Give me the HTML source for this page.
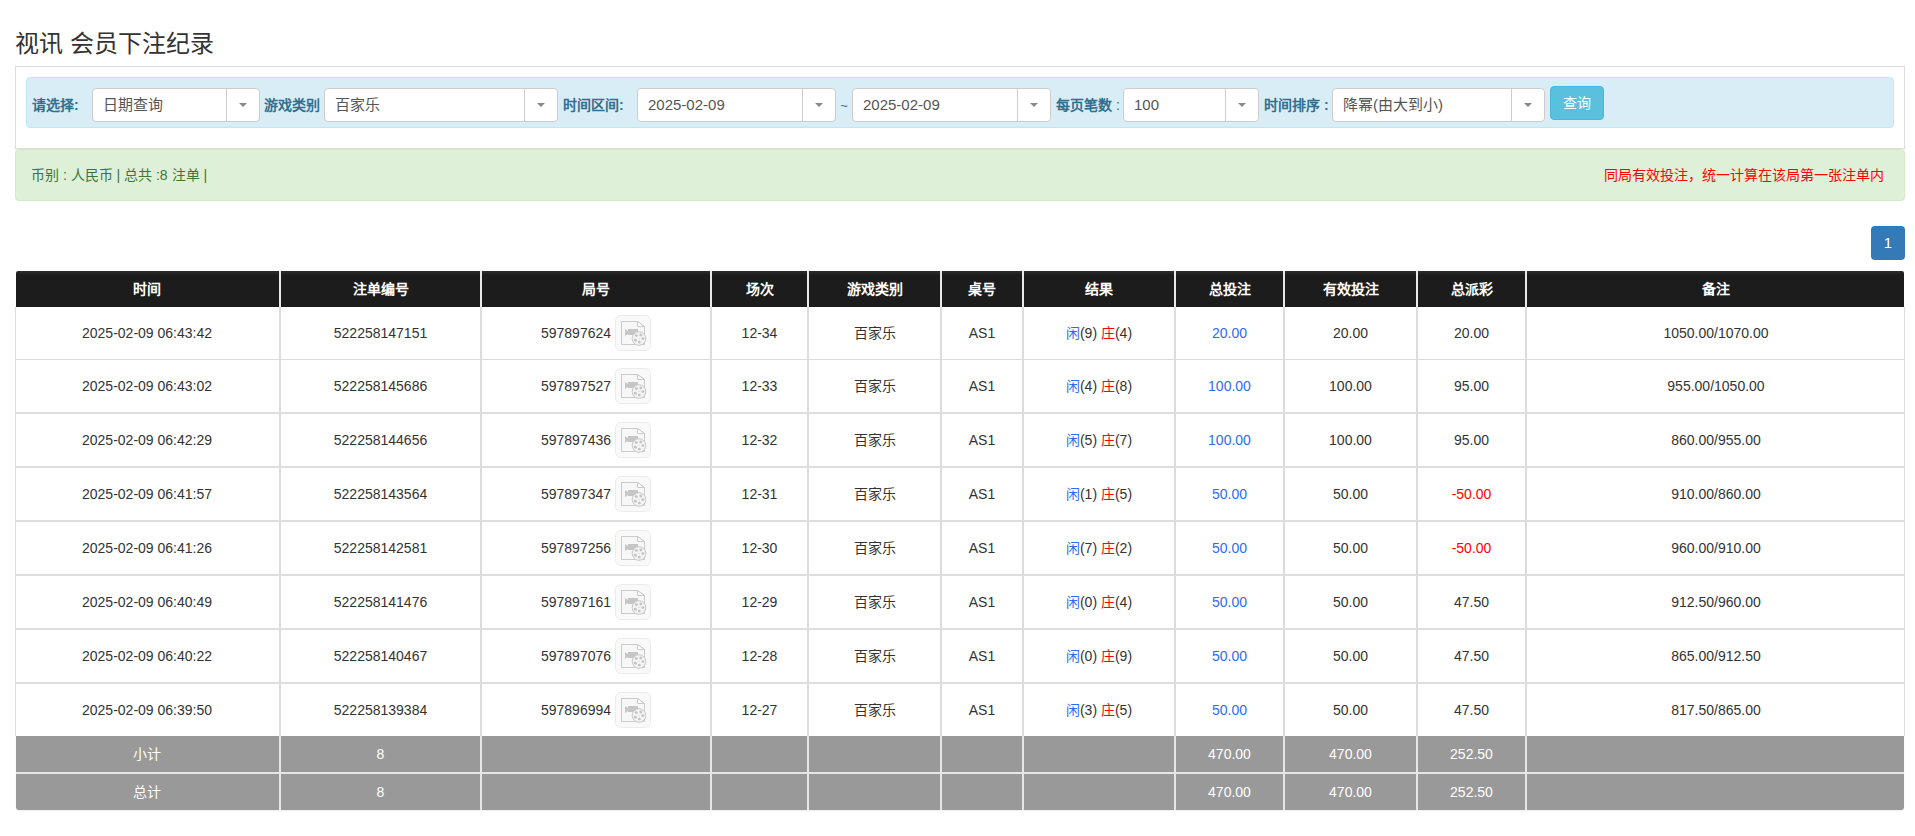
<!DOCTYPE html><html lang="zh-CN"><head><meta charset="utf-8"><style>
*{box-sizing:border-box;margin:0;padding:0}
html,body{width:1915px;height:836px;overflow:hidden;background:#fff;font-family:"Liberation Sans", sans-serif;color:#333;line-height:1}
.a{position:absolute}
.c{position:absolute;display:flex;align-items:center;justify-content:center;white-space:nowrap}
.title{left:15px;top:27px;font-size:24px;line-height:34px;color:#333;white-space:nowrap}
.panel{left:15px;top:66px;width:1890px;height:83px;border:1px solid #ddd;background:#fff}
.info{left:26px;top:77px;width:1868px;height:51px;background:#d9edf7;border:1px solid #bce8f1;border-radius:4px}
.lbl{position:absolute;top:88px;height:34px;display:flex;align-items:center;font-size:14px;font-weight:bold;color:#31708f;white-space:nowrap}
.sel{position:absolute;top:88px;height:34px;background:#fff;border:1px solid #ccc;border-radius:4px}
.sel .t{position:absolute;left:10px;top:-1px;height:32px;display:flex;align-items:center;font-size:15px;color:#555;white-space:nowrap}
.sel .d{position:absolute;top:0;width:1px;height:32px;background:#ccc}
.sel .ar{position:absolute;top:14px;width:0;height:0;border-left:4px solid transparent;border-right:4px solid transparent;border-top:4px solid #888}
.btn{left:1550px;top:86px;width:54px;height:34px;background:#5bc0de;border:1px solid #46b8da;border-radius:4px;color:#fff;font-size:14px;display:flex;align-items:center;justify-content:center}
.alert{left:15px;top:149px;width:1890px;height:52px;background:#dff0d8;border:1px solid #d6e9c6;border-radius:4px}
.pg{left:1871px;top:226px;width:34px;height:34px;background:#337ab7;border-radius:4px;color:#fff;font-size:15px;display:flex;align-items:center;justify-content:center;padding-bottom:2px}
.hd{color:#fff;font-weight:bold;font-size:14px}
.td{font-size:14px;color:#333}
.ft{color:#fff;font-size:14px}
.bl{color:#2d6cf0}
.rd{color:#f00}
.rd2{color:#f00}
</style></head><body>
<div class="a title">视讯 会员下注纪录</div>
<div class="a panel"></div>
<div class="a info"></div>
<div class="lbl" style="left:32px">请选择:</div>
<div class="lbl" style="left:264px">游戏类别</div>
<div class="lbl" style="left:563px">时间区间:</div>
<div class="lbl" style="left:1056px">每页笔数<span style="font-weight:normal">&nbsp;:</span></div>
<div class="lbl" style="left:1264px">时间排序 :</div>
<div class="sel" style="left:92px;width:168px"><div class="t">日期查询</div><div class="d" style="left:133px"></div><div class="ar" style="left:146px"></div></div>
<div class="sel" style="left:324px;width:234px"><div class="t">百家乐</div><div class="d" style="left:199px"></div><div class="ar" style="left:212px"></div></div>
<div class="sel" style="left:637px;width:199px"><div class="t">2025-02-09</div><div class="d" style="left:164px"></div><div class="ar" style="left:177px"></div></div>
<div class="sel" style="left:852px;width:199px"><div class="t">2025-02-09</div><div class="d" style="left:164px"></div><div class="ar" style="left:177px"></div></div>
<div class="sel" style="left:1123px;width:136px"><div class="t">100</div><div class="d" style="left:101px"></div><div class="ar" style="left:114px"></div></div>
<div class="sel" style="left:1332px;width:213px"><div class="t">降幂(由大到小)</div><div class="d" style="left:178px"></div><div class="ar" style="left:191px"></div></div>
<div class="c" style="left:838px;top:88px;width:12px;height:34px;font-size:13px;color:#31708f">~</div>
<div class="a btn">查询</div>
<div class="a alert"></div>
<div class="c" style="left:31px;top:149px;height:52px;font-size:14px;color:#3c763d">币别 : 人民币 | 总共 :8 注单 |</div>
<div class="c" style="left:1604px;top:149px;height:52px;font-size:14px;color:#f00">同局有效投注，统一计算在该局第一张注单内</div>
<div class="a pg">1</div>
<div class="a" style="left:16px;top:271px;width:1888px;height:36px;background:linear-gradient(#2c2c2c,#262626 2px,#1c1c1c 4px);border-radius:2px 2px 0 0"></div>
<div class="a" style="left:279px;top:271px;width:2px;height:36px;background:#e8e8e8"></div>
<div class="a" style="left:480px;top:271px;width:2px;height:36px;background:#e8e8e8"></div>
<div class="a" style="left:710px;top:271px;width:2px;height:36px;background:#e8e8e8"></div>
<div class="a" style="left:807px;top:271px;width:2px;height:36px;background:#e8e8e8"></div>
<div class="a" style="left:940px;top:271px;width:2px;height:36px;background:#e8e8e8"></div>
<div class="a" style="left:1022px;top:271px;width:2px;height:36px;background:#e8e8e8"></div>
<div class="a" style="left:1174px;top:271px;width:2px;height:36px;background:#e8e8e8"></div>
<div class="a" style="left:1283px;top:271px;width:2px;height:36px;background:#e8e8e8"></div>
<div class="a" style="left:1416px;top:271px;width:2px;height:36px;background:#e8e8e8"></div>
<div class="a" style="left:1525px;top:271px;width:2px;height:36px;background:#e8e8e8"></div>
<div class="c hd" style="left:15px;top:271px;width:264px;height:36px"><span>时间</span></div>
<div class="c hd" style="left:281px;top:271px;width:199px;height:36px"><span>注单编号</span></div>
<div class="c hd" style="left:482px;top:271px;width:228px;height:36px"><span>局号</span></div>
<div class="c hd" style="left:712px;top:271px;width:95px;height:36px"><span>场次</span></div>
<div class="c hd" style="left:809px;top:271px;width:131px;height:36px"><span>游戏类别</span></div>
<div class="c hd" style="left:942px;top:271px;width:80px;height:36px"><span>桌号</span></div>
<div class="c hd" style="left:1024px;top:271px;width:150px;height:36px"><span>结果</span></div>
<div class="c hd" style="left:1176px;top:271px;width:107px;height:36px"><span>总投注</span></div>
<div class="c hd" style="left:1285px;top:271px;width:131px;height:36px"><span>有效投注</span></div>
<div class="c hd" style="left:1418px;top:271px;width:107px;height:36px"><span>总派彩</span></div>
<div class="c hd" style="left:1527px;top:271px;width:378px;height:36px"><span>备注</span></div>
<svg class="a" style="left:0;top:0" width="1915" height="836" viewBox="0 0 1915 836">
<rect x="15" y="307" width="1" height="429" fill="#dcdcdc"/>
<rect x="1904" y="307" width="1" height="429" fill="#dcdcdc"/>
<rect x="16" y="359" width="1888" height="1" fill="#dcdcdc"/>
<rect x="16" y="412" width="1888" height="2" fill="#dedede"/>
<rect x="16" y="466" width="1888" height="2" fill="#dedede"/>
<rect x="16" y="520" width="1888" height="2" fill="#dedede"/>
<rect x="16" y="574" width="1888" height="2" fill="#dedede"/>
<rect x="16" y="628" width="1888" height="2" fill="#dedede"/>
<rect x="16" y="682" width="1888" height="2" fill="#dedede"/>
<rect x="279" y="307" width="2" height="429" fill="#dcdcdc"/>
<rect x="480" y="307" width="2" height="429" fill="#dcdcdc"/>
<rect x="710" y="307" width="2" height="429" fill="#dcdcdc"/>
<rect x="807" y="307" width="2" height="429" fill="#dcdcdc"/>
<rect x="940" y="307" width="2" height="429" fill="#dcdcdc"/>
<rect x="1022" y="307" width="2" height="429" fill="#dcdcdc"/>
<rect x="1174" y="307" width="2" height="429" fill="#dcdcdc"/>
<rect x="1283" y="307" width="2" height="429" fill="#dcdcdc"/>
<rect x="1416" y="307" width="2" height="429" fill="#dcdcdc"/>
<rect x="1525" y="307" width="2" height="429" fill="#dcdcdc"/>
</svg>
<div class="c td" style="left:15px;top:307px;width:264px;height:52px"><span>2025-02-09 06:43:42</span></div>
<div class="c td" style="left:281px;top:307px;width:199px;height:52px"><span>522258147151</span></div>
<div class="c td" style="left:482px;top:307px;width:228px;height:52px"><span>597897624</span><svg width="36" height="36" viewBox="0 0 36 36" style="margin-left:4px;flex:none"><rect x="0.5" y="0.5" width="35" height="35" rx="5" fill="#f9f9f9" stroke="#ebebeb"/><path d="M6.5 6.5H22.5L29.5 11.5V29.5H6.5Z" fill="#f7f7f7" stroke="#cbcbcb"/><path d="M22.5 6.5V11.5H29.5Z" fill="#fefefe" stroke="#cbcbcb" stroke-linejoin="round"/><path d="M10 14L13 16V14H23V20H13V19L10 21Z" fill="#c6c6c6"/><circle cx="24" cy="23.5" r="6.8" fill="#f4f4f4" stroke="#c8c8c8"/><circle cx="21.3" cy="20.6" r="1.45" fill="#c4c4c4"/><circle cx="25.8" cy="20" r="1.45" fill="#c4c4c4"/><circle cx="27.9" cy="23.6" r="1.45" fill="#c4c4c4"/><circle cx="24.3" cy="27.1" r="1.45" fill="#c4c4c4"/><circle cx="20.4" cy="25.3" r="1.45" fill="#c4c4c4"/><circle cx="24" cy="23.5" r="0.5" fill="#c4c4c4"/></svg></div>
<div class="c td" style="left:712px;top:307px;width:95px;height:52px"><span>12-34</span></div>
<div class="c td" style="left:809px;top:307px;width:131px;height:52px"><span>百家乐</span></div>
<div class="c td" style="left:942px;top:307px;width:80px;height:52px"><span>AS1</span></div>
<div class="c td" style="left:1024px;top:307px;width:150px;height:52px"><span><span class="bl">闲</span>(9) <span class="rd">庄</span>(4)</span></div>
<div class="c td" style="left:1176px;top:307px;width:107px;height:52px"><span><span class="bl">20.00</span></span></div>
<div class="c td" style="left:1285px;top:307px;width:131px;height:52px"><span>20.00</span></div>
<div class="c td" style="left:1418px;top:307px;width:107px;height:52px"><span>20.00</span></div>
<div class="c td" style="left:1527px;top:307px;width:378px;height:52px"><span>1050.00/1070.00</span></div>
<div class="c td" style="left:15px;top:360px;width:264px;height:52px"><span>2025-02-09 06:43:02</span></div>
<div class="c td" style="left:281px;top:360px;width:199px;height:52px"><span>522258145686</span></div>
<div class="c td" style="left:482px;top:360px;width:228px;height:52px"><span>597897527</span><svg width="36" height="36" viewBox="0 0 36 36" style="margin-left:4px;flex:none"><rect x="0.5" y="0.5" width="35" height="35" rx="5" fill="#f9f9f9" stroke="#ebebeb"/><path d="M6.5 6.5H22.5L29.5 11.5V29.5H6.5Z" fill="#f7f7f7" stroke="#cbcbcb"/><path d="M22.5 6.5V11.5H29.5Z" fill="#fefefe" stroke="#cbcbcb" stroke-linejoin="round"/><path d="M10 14L13 16V14H23V20H13V19L10 21Z" fill="#c6c6c6"/><circle cx="24" cy="23.5" r="6.8" fill="#f4f4f4" stroke="#c8c8c8"/><circle cx="21.3" cy="20.6" r="1.45" fill="#c4c4c4"/><circle cx="25.8" cy="20" r="1.45" fill="#c4c4c4"/><circle cx="27.9" cy="23.6" r="1.45" fill="#c4c4c4"/><circle cx="24.3" cy="27.1" r="1.45" fill="#c4c4c4"/><circle cx="20.4" cy="25.3" r="1.45" fill="#c4c4c4"/><circle cx="24" cy="23.5" r="0.5" fill="#c4c4c4"/></svg></div>
<div class="c td" style="left:712px;top:360px;width:95px;height:52px"><span>12-33</span></div>
<div class="c td" style="left:809px;top:360px;width:131px;height:52px"><span>百家乐</span></div>
<div class="c td" style="left:942px;top:360px;width:80px;height:52px"><span>AS1</span></div>
<div class="c td" style="left:1024px;top:360px;width:150px;height:52px"><span><span class="bl">闲</span>(4) <span class="rd">庄</span>(8)</span></div>
<div class="c td" style="left:1176px;top:360px;width:107px;height:52px"><span><span class="bl">100.00</span></span></div>
<div class="c td" style="left:1285px;top:360px;width:131px;height:52px"><span>100.00</span></div>
<div class="c td" style="left:1418px;top:360px;width:107px;height:52px"><span>95.00</span></div>
<div class="c td" style="left:1527px;top:360px;width:378px;height:52px"><span>955.00/1050.00</span></div>
<div class="c td" style="left:15px;top:414px;width:264px;height:52px"><span>2025-02-09 06:42:29</span></div>
<div class="c td" style="left:281px;top:414px;width:199px;height:52px"><span>522258144656</span></div>
<div class="c td" style="left:482px;top:414px;width:228px;height:52px"><span>597897436</span><svg width="36" height="36" viewBox="0 0 36 36" style="margin-left:4px;flex:none"><rect x="0.5" y="0.5" width="35" height="35" rx="5" fill="#f9f9f9" stroke="#ebebeb"/><path d="M6.5 6.5H22.5L29.5 11.5V29.5H6.5Z" fill="#f7f7f7" stroke="#cbcbcb"/><path d="M22.5 6.5V11.5H29.5Z" fill="#fefefe" stroke="#cbcbcb" stroke-linejoin="round"/><path d="M10 14L13 16V14H23V20H13V19L10 21Z" fill="#c6c6c6"/><circle cx="24" cy="23.5" r="6.8" fill="#f4f4f4" stroke="#c8c8c8"/><circle cx="21.3" cy="20.6" r="1.45" fill="#c4c4c4"/><circle cx="25.8" cy="20" r="1.45" fill="#c4c4c4"/><circle cx="27.9" cy="23.6" r="1.45" fill="#c4c4c4"/><circle cx="24.3" cy="27.1" r="1.45" fill="#c4c4c4"/><circle cx="20.4" cy="25.3" r="1.45" fill="#c4c4c4"/><circle cx="24" cy="23.5" r="0.5" fill="#c4c4c4"/></svg></div>
<div class="c td" style="left:712px;top:414px;width:95px;height:52px"><span>12-32</span></div>
<div class="c td" style="left:809px;top:414px;width:131px;height:52px"><span>百家乐</span></div>
<div class="c td" style="left:942px;top:414px;width:80px;height:52px"><span>AS1</span></div>
<div class="c td" style="left:1024px;top:414px;width:150px;height:52px"><span><span class="bl">闲</span>(5) <span class="rd">庄</span>(7)</span></div>
<div class="c td" style="left:1176px;top:414px;width:107px;height:52px"><span><span class="bl">100.00</span></span></div>
<div class="c td" style="left:1285px;top:414px;width:131px;height:52px"><span>100.00</span></div>
<div class="c td" style="left:1418px;top:414px;width:107px;height:52px"><span>95.00</span></div>
<div class="c td" style="left:1527px;top:414px;width:378px;height:52px"><span>860.00/955.00</span></div>
<div class="c td" style="left:15px;top:468px;width:264px;height:52px"><span>2025-02-09 06:41:57</span></div>
<div class="c td" style="left:281px;top:468px;width:199px;height:52px"><span>522258143564</span></div>
<div class="c td" style="left:482px;top:468px;width:228px;height:52px"><span>597897347</span><svg width="36" height="36" viewBox="0 0 36 36" style="margin-left:4px;flex:none"><rect x="0.5" y="0.5" width="35" height="35" rx="5" fill="#f9f9f9" stroke="#ebebeb"/><path d="M6.5 6.5H22.5L29.5 11.5V29.5H6.5Z" fill="#f7f7f7" stroke="#cbcbcb"/><path d="M22.5 6.5V11.5H29.5Z" fill="#fefefe" stroke="#cbcbcb" stroke-linejoin="round"/><path d="M10 14L13 16V14H23V20H13V19L10 21Z" fill="#c6c6c6"/><circle cx="24" cy="23.5" r="6.8" fill="#f4f4f4" stroke="#c8c8c8"/><circle cx="21.3" cy="20.6" r="1.45" fill="#c4c4c4"/><circle cx="25.8" cy="20" r="1.45" fill="#c4c4c4"/><circle cx="27.9" cy="23.6" r="1.45" fill="#c4c4c4"/><circle cx="24.3" cy="27.1" r="1.45" fill="#c4c4c4"/><circle cx="20.4" cy="25.3" r="1.45" fill="#c4c4c4"/><circle cx="24" cy="23.5" r="0.5" fill="#c4c4c4"/></svg></div>
<div class="c td" style="left:712px;top:468px;width:95px;height:52px"><span>12-31</span></div>
<div class="c td" style="left:809px;top:468px;width:131px;height:52px"><span>百家乐</span></div>
<div class="c td" style="left:942px;top:468px;width:80px;height:52px"><span>AS1</span></div>
<div class="c td" style="left:1024px;top:468px;width:150px;height:52px"><span><span class="bl">闲</span>(1) <span class="rd">庄</span>(5)</span></div>
<div class="c td" style="left:1176px;top:468px;width:107px;height:52px"><span><span class="bl">50.00</span></span></div>
<div class="c td" style="left:1285px;top:468px;width:131px;height:52px"><span>50.00</span></div>
<div class="c td" style="left:1418px;top:468px;width:107px;height:52px"><span><span class="rd2">-50.00</span></span></div>
<div class="c td" style="left:1527px;top:468px;width:378px;height:52px"><span>910.00/860.00</span></div>
<div class="c td" style="left:15px;top:522px;width:264px;height:52px"><span>2025-02-09 06:41:26</span></div>
<div class="c td" style="left:281px;top:522px;width:199px;height:52px"><span>522258142581</span></div>
<div class="c td" style="left:482px;top:522px;width:228px;height:52px"><span>597897256</span><svg width="36" height="36" viewBox="0 0 36 36" style="margin-left:4px;flex:none"><rect x="0.5" y="0.5" width="35" height="35" rx="5" fill="#f9f9f9" stroke="#ebebeb"/><path d="M6.5 6.5H22.5L29.5 11.5V29.5H6.5Z" fill="#f7f7f7" stroke="#cbcbcb"/><path d="M22.5 6.5V11.5H29.5Z" fill="#fefefe" stroke="#cbcbcb" stroke-linejoin="round"/><path d="M10 14L13 16V14H23V20H13V19L10 21Z" fill="#c6c6c6"/><circle cx="24" cy="23.5" r="6.8" fill="#f4f4f4" stroke="#c8c8c8"/><circle cx="21.3" cy="20.6" r="1.45" fill="#c4c4c4"/><circle cx="25.8" cy="20" r="1.45" fill="#c4c4c4"/><circle cx="27.9" cy="23.6" r="1.45" fill="#c4c4c4"/><circle cx="24.3" cy="27.1" r="1.45" fill="#c4c4c4"/><circle cx="20.4" cy="25.3" r="1.45" fill="#c4c4c4"/><circle cx="24" cy="23.5" r="0.5" fill="#c4c4c4"/></svg></div>
<div class="c td" style="left:712px;top:522px;width:95px;height:52px"><span>12-30</span></div>
<div class="c td" style="left:809px;top:522px;width:131px;height:52px"><span>百家乐</span></div>
<div class="c td" style="left:942px;top:522px;width:80px;height:52px"><span>AS1</span></div>
<div class="c td" style="left:1024px;top:522px;width:150px;height:52px"><span><span class="bl">闲</span>(7) <span class="rd">庄</span>(2)</span></div>
<div class="c td" style="left:1176px;top:522px;width:107px;height:52px"><span><span class="bl">50.00</span></span></div>
<div class="c td" style="left:1285px;top:522px;width:131px;height:52px"><span>50.00</span></div>
<div class="c td" style="left:1418px;top:522px;width:107px;height:52px"><span><span class="rd2">-50.00</span></span></div>
<div class="c td" style="left:1527px;top:522px;width:378px;height:52px"><span>960.00/910.00</span></div>
<div class="c td" style="left:15px;top:576px;width:264px;height:52px"><span>2025-02-09 06:40:49</span></div>
<div class="c td" style="left:281px;top:576px;width:199px;height:52px"><span>522258141476</span></div>
<div class="c td" style="left:482px;top:576px;width:228px;height:52px"><span>597897161</span><svg width="36" height="36" viewBox="0 0 36 36" style="margin-left:4px;flex:none"><rect x="0.5" y="0.5" width="35" height="35" rx="5" fill="#f9f9f9" stroke="#ebebeb"/><path d="M6.5 6.5H22.5L29.5 11.5V29.5H6.5Z" fill="#f7f7f7" stroke="#cbcbcb"/><path d="M22.5 6.5V11.5H29.5Z" fill="#fefefe" stroke="#cbcbcb" stroke-linejoin="round"/><path d="M10 14L13 16V14H23V20H13V19L10 21Z" fill="#c6c6c6"/><circle cx="24" cy="23.5" r="6.8" fill="#f4f4f4" stroke="#c8c8c8"/><circle cx="21.3" cy="20.6" r="1.45" fill="#c4c4c4"/><circle cx="25.8" cy="20" r="1.45" fill="#c4c4c4"/><circle cx="27.9" cy="23.6" r="1.45" fill="#c4c4c4"/><circle cx="24.3" cy="27.1" r="1.45" fill="#c4c4c4"/><circle cx="20.4" cy="25.3" r="1.45" fill="#c4c4c4"/><circle cx="24" cy="23.5" r="0.5" fill="#c4c4c4"/></svg></div>
<div class="c td" style="left:712px;top:576px;width:95px;height:52px"><span>12-29</span></div>
<div class="c td" style="left:809px;top:576px;width:131px;height:52px"><span>百家乐</span></div>
<div class="c td" style="left:942px;top:576px;width:80px;height:52px"><span>AS1</span></div>
<div class="c td" style="left:1024px;top:576px;width:150px;height:52px"><span><span class="bl">闲</span>(0) <span class="rd">庄</span>(4)</span></div>
<div class="c td" style="left:1176px;top:576px;width:107px;height:52px"><span><span class="bl">50.00</span></span></div>
<div class="c td" style="left:1285px;top:576px;width:131px;height:52px"><span>50.00</span></div>
<div class="c td" style="left:1418px;top:576px;width:107px;height:52px"><span>47.50</span></div>
<div class="c td" style="left:1527px;top:576px;width:378px;height:52px"><span>912.50/960.00</span></div>
<div class="c td" style="left:15px;top:630px;width:264px;height:52px"><span>2025-02-09 06:40:22</span></div>
<div class="c td" style="left:281px;top:630px;width:199px;height:52px"><span>522258140467</span></div>
<div class="c td" style="left:482px;top:630px;width:228px;height:52px"><span>597897076</span><svg width="36" height="36" viewBox="0 0 36 36" style="margin-left:4px;flex:none"><rect x="0.5" y="0.5" width="35" height="35" rx="5" fill="#f9f9f9" stroke="#ebebeb"/><path d="M6.5 6.5H22.5L29.5 11.5V29.5H6.5Z" fill="#f7f7f7" stroke="#cbcbcb"/><path d="M22.5 6.5V11.5H29.5Z" fill="#fefefe" stroke="#cbcbcb" stroke-linejoin="round"/><path d="M10 14L13 16V14H23V20H13V19L10 21Z" fill="#c6c6c6"/><circle cx="24" cy="23.5" r="6.8" fill="#f4f4f4" stroke="#c8c8c8"/><circle cx="21.3" cy="20.6" r="1.45" fill="#c4c4c4"/><circle cx="25.8" cy="20" r="1.45" fill="#c4c4c4"/><circle cx="27.9" cy="23.6" r="1.45" fill="#c4c4c4"/><circle cx="24.3" cy="27.1" r="1.45" fill="#c4c4c4"/><circle cx="20.4" cy="25.3" r="1.45" fill="#c4c4c4"/><circle cx="24" cy="23.5" r="0.5" fill="#c4c4c4"/></svg></div>
<div class="c td" style="left:712px;top:630px;width:95px;height:52px"><span>12-28</span></div>
<div class="c td" style="left:809px;top:630px;width:131px;height:52px"><span>百家乐</span></div>
<div class="c td" style="left:942px;top:630px;width:80px;height:52px"><span>AS1</span></div>
<div class="c td" style="left:1024px;top:630px;width:150px;height:52px"><span><span class="bl">闲</span>(0) <span class="rd">庄</span>(9)</span></div>
<div class="c td" style="left:1176px;top:630px;width:107px;height:52px"><span><span class="bl">50.00</span></span></div>
<div class="c td" style="left:1285px;top:630px;width:131px;height:52px"><span>50.00</span></div>
<div class="c td" style="left:1418px;top:630px;width:107px;height:52px"><span>47.50</span></div>
<div class="c td" style="left:1527px;top:630px;width:378px;height:52px"><span>865.00/912.50</span></div>
<div class="c td" style="left:15px;top:684px;width:264px;height:52px"><span>2025-02-09 06:39:50</span></div>
<div class="c td" style="left:281px;top:684px;width:199px;height:52px"><span>522258139384</span></div>
<div class="c td" style="left:482px;top:684px;width:228px;height:52px"><span>597896994</span><svg width="36" height="36" viewBox="0 0 36 36" style="margin-left:4px;flex:none"><rect x="0.5" y="0.5" width="35" height="35" rx="5" fill="#f9f9f9" stroke="#ebebeb"/><path d="M6.5 6.5H22.5L29.5 11.5V29.5H6.5Z" fill="#f7f7f7" stroke="#cbcbcb"/><path d="M22.5 6.5V11.5H29.5Z" fill="#fefefe" stroke="#cbcbcb" stroke-linejoin="round"/><path d="M10 14L13 16V14H23V20H13V19L10 21Z" fill="#c6c6c6"/><circle cx="24" cy="23.5" r="6.8" fill="#f4f4f4" stroke="#c8c8c8"/><circle cx="21.3" cy="20.6" r="1.45" fill="#c4c4c4"/><circle cx="25.8" cy="20" r="1.45" fill="#c4c4c4"/><circle cx="27.9" cy="23.6" r="1.45" fill="#c4c4c4"/><circle cx="24.3" cy="27.1" r="1.45" fill="#c4c4c4"/><circle cx="20.4" cy="25.3" r="1.45" fill="#c4c4c4"/><circle cx="24" cy="23.5" r="0.5" fill="#c4c4c4"/></svg></div>
<div class="c td" style="left:712px;top:684px;width:95px;height:52px"><span>12-27</span></div>
<div class="c td" style="left:809px;top:684px;width:131px;height:52px"><span>百家乐</span></div>
<div class="c td" style="left:942px;top:684px;width:80px;height:52px"><span>AS1</span></div>
<div class="c td" style="left:1024px;top:684px;width:150px;height:52px"><span><span class="bl">闲</span>(3) <span class="rd">庄</span>(5)</span></div>
<div class="c td" style="left:1176px;top:684px;width:107px;height:52px"><span><span class="bl">50.00</span></span></div>
<div class="c td" style="left:1285px;top:684px;width:131px;height:52px"><span>50.00</span></div>
<div class="c td" style="left:1418px;top:684px;width:107px;height:52px"><span>47.50</span></div>
<div class="c td" style="left:1527px;top:684px;width:378px;height:52px"><span>817.50/865.00</span></div>
<div class="a" style="left:16px;top:736px;width:1888px;height:74px;background:#999;border-radius:0 0 3px 3px;box-shadow:0 1px 2px rgba(0,0,0,0.08)"></div>
<div class="a" style="left:16px;top:772px;width:1888px;height:2px;background:#e6e6e6"></div>
<div class="a" style="left:279px;top:736px;width:2px;height:74px;background:#e6e6e6"></div>
<div class="a" style="left:480px;top:736px;width:2px;height:74px;background:#e6e6e6"></div>
<div class="a" style="left:710px;top:736px;width:2px;height:74px;background:#e6e6e6"></div>
<div class="a" style="left:807px;top:736px;width:2px;height:74px;background:#e6e6e6"></div>
<div class="a" style="left:940px;top:736px;width:2px;height:74px;background:#e6e6e6"></div>
<div class="a" style="left:1022px;top:736px;width:2px;height:74px;background:#e6e6e6"></div>
<div class="a" style="left:1174px;top:736px;width:2px;height:74px;background:#e6e6e6"></div>
<div class="a" style="left:1283px;top:736px;width:2px;height:74px;background:#e6e6e6"></div>
<div class="a" style="left:1416px;top:736px;width:2px;height:74px;background:#e6e6e6"></div>
<div class="a" style="left:1525px;top:736px;width:2px;height:74px;background:#e6e6e6"></div>
<div class="c ft" style="left:15px;top:736px;width:264px;height:36px"><span>小计</span></div>
<div class="c ft" style="left:281px;top:736px;width:199px;height:36px"><span>8</span></div>
<div class="c ft" style="left:1176px;top:736px;width:107px;height:36px"><span>470.00</span></div>
<div class="c ft" style="left:1285px;top:736px;width:131px;height:36px"><span>470.00</span></div>
<div class="c ft" style="left:1418px;top:736px;width:107px;height:36px"><span>252.50</span></div>
<div class="c ft" style="left:15px;top:774px;width:264px;height:36px"><span>总计</span></div>
<div class="c ft" style="left:281px;top:774px;width:199px;height:36px"><span>8</span></div>
<div class="c ft" style="left:1176px;top:774px;width:107px;height:36px"><span>470.00</span></div>
<div class="c ft" style="left:1285px;top:774px;width:131px;height:36px"><span>470.00</span></div>
<div class="c ft" style="left:1418px;top:774px;width:107px;height:36px"><span>252.50</span></div>
</body></html>
